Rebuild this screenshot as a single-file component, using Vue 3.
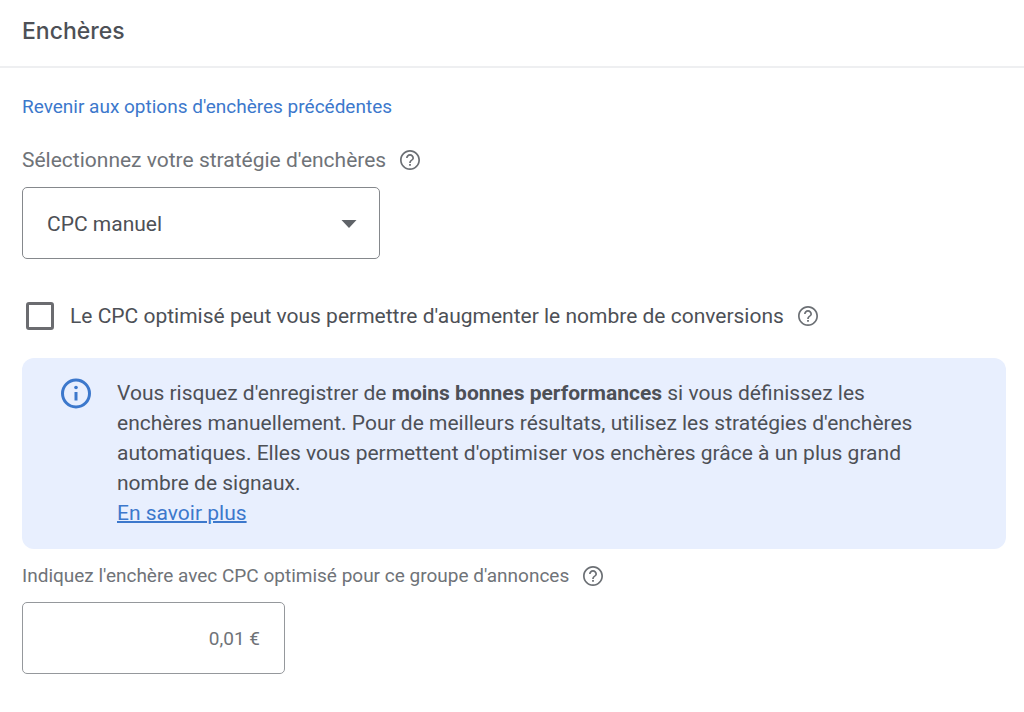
<script setup>
import { ref, h } from 'vue'

const strategy = ref('cpc')
const enhanced = ref(false)
const bid = ref('0,01 €')

const HelpIcon = () =>
  h('svg', { viewBox: '0 0 24 24', width: 24, height: 24, fill: 'currentColor', 'aria-hidden': 'true' }, [
    h('path', {
      d: 'M11.1 17.8h1.8V16h-1.8v1.8zM12 2C6.48 2 2 6.48 2 12s4.48 10 10 10 10-4.48 10-10S17.52 2 12 2zm0 18.3c-4.58 0-8.3-3.72-8.3-8.3S7.42 3.7 12 3.7s8.3 3.72 8.3 8.3-3.72 8.3-8.3 8.3zM12 6c-2.21 0-4 1.79-4 4h1.7c0-1.25 1.05-2.3 2.3-2.3s2.3 1.05 2.3 2.3c0 2-3.15 1.8-3.15 5h1.7c0-2.25 3.15-2.5 3.15-5 0-2.21-1.79-4-4-4z'
    })
  ])
</script>

<template>
  <section class="panel">
    <header class="head">
      <h1>Enchères</h1>
    </header>

    <div class="body">
      <a class="back" href="#">Revenir aux options d'enchères précédentes</a>

      <div class="row label-row">
        <label class="wide" for="strategy">Sélectionnez votre stratégie d'enchères</label>
        <button class="help" type="button" aria-label="Aide"><HelpIcon /></button>
      </div>

      <div class="select">
        <select id="strategy" v-model="strategy">
          <option value="cpc">CPC manuel</option>
        </select>
        <svg class="arrow" viewBox="0 0 16 8" width="16" height="8" aria-hidden="true">
          <path d="M0.5 0h15L8 8z" fill="currentColor" />
        </svg>
      </div>

      <div class="row check-row">
        <input id="enhanced" v-model="enhanced" type="checkbox" />
        <label class="wide" for="enhanced">Le CPC optimisé peut vous permettre d'augmenter le nombre de conversions</label>
        <button class="help" type="button" aria-label="Aide"><HelpIcon /></button>
      </div>

      <div class="notice">
        <svg class="info" viewBox="0 0 32 32" width="32" height="32" aria-hidden="true">
          <circle cx="16" cy="15.5" r="13.5" fill="none" stroke="currentColor" stroke-width="3" />
          <circle cx="16" cy="9.5" r="1.8" fill="currentColor" />
          <path d="M16 14v8.5" stroke="currentColor" stroke-width="3" />
        </svg>
        <p>
          Vous risquez d'enregistrer de <strong>moins bonnes performances</strong> si vous définissez les
          enchères manuellement. Pour de meilleurs résultats, utilisez les stratégies d'enchères
          automatiques. Elles vous permettent d'optimiser vos enchères grâce à un plus grand
          nombre de signaux.<br />
          <a href="#">En savoir plus</a>
        </p>
      </div>

      <div class="row bid-row">
        <label for="bid">Indiquez l'enchère avec CPC optimisé pour ce groupe d'annonces</label>
        <button class="help" type="button" aria-label="Aide"><HelpIcon /></button>
      </div>

      <input id="bid" v-model="bid" class="bid" type="text" />
    </div>
  </section>
</template>

<style>
body {
  margin: 0;
  background: #fff;
}
</style>

<style scoped>
.panel {
  font-family: Roboto, "Liberation Sans", sans-serif;
  font-size: 19px;
  line-height: 30px;
  color: #4d5056;
}
.head {
  padding: 16px 22px 20px;
  border-bottom: 2px solid #eeeff1;
}
h1 {
  margin: 0;
  font-family: Inter, Roboto, sans-serif;
  font-size: 23px;
  font-weight: 500;
  line-height: 30px;
}
.body {
  display: flex;
  flex-direction: column;
  align-items: flex-start;
  padding: 24px 18px 38px 22px;
}
a {
  color: #3c78cc;
}
.back {
  text-decoration: none;
}
.row {
  display: flex;
  align-items: center;
  gap: 12px;
  color: #6f7378;
}
.wide {
  font-size: 21px;
}
.help {
  display: flex;
  padding: 0;
  border: 0;
  background: none;
  color: #6b6f74;
}
.label-row {
  margin-top: 23px;
}
.select {
  position: relative;
  width: 358px;
  max-width: 100%;
  margin-top: 12px;
}
select {
  display: block;
  width: 100%;
  height: 72px;
  padding: 2px 48px 0 24px;
  border: 1px solid #85888c;
  border-radius: 5px;
  appearance: none;
  background: #fff;
  color: #4d5056;
  font: inherit;
  font-size: 21px;
}
.arrow {
  position: absolute;
  top: 33px;
  right: 23px;
  color: #5f6368;
  pointer-events: none;
}
.check-row {
  margin-top: 42px;
  color: #4d5056;
}
input[type="checkbox"] {
  flex: none;
  width: 28px;
  height: 28px;
  margin: 0 4px;
  border: 3px solid #6b6c70;
  border-radius: 3px;
  appearance: none;
  background: #fff;
}
input[type="checkbox"]:checked {
  background: #3c78cc;
}
.notice {
  display: flex;
  align-items: flex-start;
  align-self: stretch;
  gap: 25px;
  margin-top: 27px;
  padding: 20px 64px 21px 38px;
  border-radius: 12px;
  background: #e8effe;
}
.info {
  flex: none;
  color: #3c78cc;
}
p {
  margin: 0;
  font-size: 21px;
}
.notice a {
  text-decoration-thickness: 2px;
}
.bid-row {
  margin-top: 12px;
}
.bid {
  box-sizing: border-box;
  width: 263px;
  height: 72px;
  margin-top: 11px;
  padding: 0 24px;
  border: 1px solid #95989c;
  border-radius: 5px;
  background: #fff;
  color: #6f7378;
  font: inherit;
  text-align: right;
}
</style>
